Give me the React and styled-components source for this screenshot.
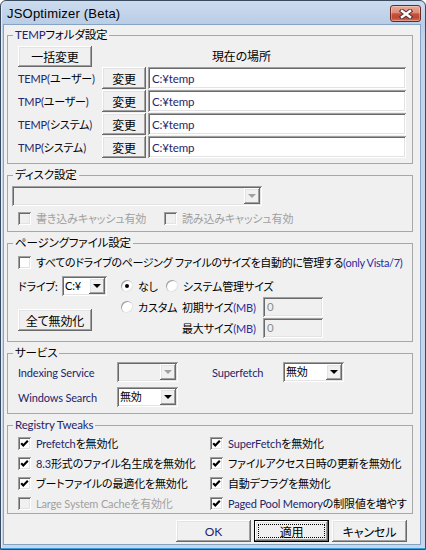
import React from "react";
import styled, { createGlobalStyle, css } from "styled-components";

const GlobalStyle = createGlobalStyle`
  html, body {
    margin: 0;
    padding: 0;
    background: #ffffff;
  }
  body {
    font-family: Lato, "Noto Sans CJK JP", sans-serif;
    font-size: 11px;
    letter-spacing: -0.15px;
    font-feature-settings: "palt";
    color: #000;
  }
  * {
    box-sizing: border-box;
  }
`;

// classic 3D edges
const sunken = css`
  box-shadow: inset 1px 1px 0 #a0a0a0, inset -1px -1px 0 #ffffff,
    inset 2px 2px 0 #696969, inset -2px -2px 0 #e3e3e3;
`;

const raised = css`
  box-shadow: inset -1px -1px 0 #696969, inset 1px 1px 0 #ffffff,
    inset -2px -2px 0 #a0a0a0, inset 2px 2px 0 #e3e3e3;
`;

const CheckMark = () => (
  <svg width="13" height="13" viewBox="0 0 13 13">
    <polyline
      points="3.2,6.2 5.3,8.4 9.8,3.8"
      fill="none"
      stroke="#000"
      strokeWidth="2.2"
    />
  </svg>
);

const CheckBox = ({ checked, disabled, children }) => (
  <CheckLabel $disabled={disabled}>
    <Box $disabled={disabled}>{checked && <CheckMark />}</Box>
    {children}
  </CheckLabel>
);

const RadioButton = ({ checked, children }) => (
  <CheckLabel>
    <Radio $checked={checked} />
    {children}
  </CheckLabel>
);

const ComboBox = ({ width, disabled, value }) => (
  <Combo $w={width} $disabled={disabled}>
    <ComboText>{value}</ComboText>
    <ComboArrow $disabled={disabled} />
  </Combo>
);

const tempRows = [
  ["TEMP", "ユーザー"],
  ["TMP", "ユーザー"],
  ["TEMP", "システム"],
  ["TMP", "システム"],
];

const App = () => {
  return (
    <>
      <GlobalStyle />
      <Window>
        <TitleBar>
          <Title>JSOptimizer (Beta)</Title>
          <CloseButton>
            <svg width="14" height="10" viewBox="0 0 14 10">
              <path
                d="M3 2 L11 8 M11 2 L3 8"
                stroke="#5b3030"
                strokeWidth="4.4"
                strokeLinecap="square"
              />
              <path
                d="M3 2 L11 8 M11 2 L3 8"
                stroke="#ffffff"
                strokeWidth="2.4"
                strokeLinecap="square"
              />
            </svg>
          </CloseButton>
        </TitleBar>

        <Client>
          <Group>
            <Legend>
              <Lat>TEMP</Lat>フォルダ設定
            </Legend>
            <TempGrid>
              <Button $w={74} $h={21}>
                一括変更
              </Button>
              <CurrentLabel>現在の場所</CurrentLabel>
              {tempRows.map(([name, kind], i) => (
                <React.Fragment key={i}>
                  <RowLabel>
                    <Lat>{name}(</Lat>
                    {kind}
                    <Lat>)</Lat>
                  </RowLabel>
                  <Button $w={44}>変更</Button>
                  <TextBox readOnly value="C:¥temp" />
                </React.Fragment>
              ))}
            </TempGrid>
          </Group>

          <Group>
            <Legend>ディスク設定</Legend>
            <DiskBody>
              <ComboBox width={250} disabled value="" />
              <DiskChecks>
                <CheckBox disabled>書き込みキャッシュ有効</CheckBox>
                <CheckBox disabled>読み込みキャッシュ有効</CheckBox>
              </DiskChecks>
            </DiskBody>
          </Group>

          <Group>
            <Legend>ページングファイル設定</Legend>
            <PagingBody>
              <CheckRow>
                <CheckBox>
                  <TightText>
                    すべてのドライブのページング ファイルのサイズを自動的に管理する
                    <Blue>(only Vista/7)</Blue>
                  </TightText>
                </CheckBox>
              </CheckRow>
              <PagingMain>
                <DriveCol>
                  <DriveRow>
                    <span>ドライブ:</span>
                    <ComboBox width={45} value="C:¥" />
                  </DriveRow>
                  <Button $w={74}>全て無効化</Button>
                </DriveCol>
                <SizeGrid>
                  <RadioRow>
                    <RadioButton checked>なし</RadioButton>
                    <RadioButton>システム管理サイズ</RadioButton>
                  </RadioRow>
                  <RadioButton>カスタム</RadioButton>
                  <SizeLabel>
                    初期サイズ<Blue>(MB)</Blue>
                  </SizeLabel>
                  <TextBox readOnly disabled value="0" $w={60} $h={20} />
                  <SizeLabel $col={2}>
                    最大サイズ<Blue>(MB)</Blue>
                  </SizeLabel>
                  <TextBox readOnly disabled value="0" $w={60} $h={20} />
                </SizeGrid>
              </PagingMain>
            </PagingBody>
          </Group>

          <Group>
            <Legend>サービス</Legend>
            <ServiceGrid>
              <Lat>Indexing Service</Lat>
              <ComboBox width={61} disabled value="" />
              <Lat>Superfetch</Lat>
              <ComboBox width={61} value="無効" />
              <Lat>Windows Search</Lat>
              <ComboBox width={61} value="無効" />
            </ServiceGrid>
          </Group>

          <Group>
            <Legend>
              <Lat>Registry Tweaks</Lat>
            </Legend>
            <TweakGrid>
              <CheckBox checked>
                <span>
                  <Lat>Prefetch</Lat>を無効化
                </span>
              </CheckBox>
              <CheckBox checked>
                <span>
                  <Lat>SuperFetch</Lat>を無効化
                </span>
              </CheckBox>
              <CheckBox checked>
                <span>
                  <Lat>8.3</Lat>形式のファイル名生成を無効化
                </span>
              </CheckBox>
              <CheckBox checked>ファイルアクセス日時の更新を無効化</CheckBox>
              <CheckBox checked>ブートファイルの最適化を無効化</CheckBox>
              <CheckBox checked>自動デフラグを無効化</CheckBox>
              <CheckBox disabled>Large System Cacheを有効化</CheckBox>
              <CheckBox checked>
                <span>
                  <Lat>Paged Pool Memory</Lat>の制限値を増やす
                </span>
              </CheckBox>
            </TweakGrid>
          </Group>

          <ButtonRow>
            <Button $w={75}>
              <Lat>OK</Lat>
            </Button>
            <Button $w={75} $default>
              適用
            </Button>
            <Button $w={75}>キャンセル</Button>
          </ButtonRow>
        </Client>
      </Window>
    </>
  );
};

const Window = styled.div`
  width: 426px;
  height: 550px;
  display: flex;
  flex-direction: column;
  border: 1px solid #3b4b5f;
  border-radius: 6px 6px 0 0;
  background: linear-gradient(#cddcef, #b9cde6 23px, #c2d5ec 40px, #c4d7ed);
  box-shadow: inset 0 -1px 0 #3a9ddc, inset 1px 0 0 #e4eef9;
`;

const TitleBar = styled.div`
  height: 23px;
  flex: none;
  display: flex;
  justify-content: space-between;
  align-items: center;
  padding: 0 4px 0 6px;
`;

const Title = styled.span`
  font-family: "Liberation Sans", Arial, sans-serif;
  font-size: 13px;
  letter-spacing: 0.2px;
  color: #000;
  margin-top: 1px;
`;

const CloseButton = styled.div`
  align-self: flex-start;
  margin-top: 4px;
  width: 31px;
  height: 17px;
  border: 1px solid #6b2a22;
  border-radius: 3px;
  background: linear-gradient(
    #e9a99a 0%,
    #dc8c79 45%,
    #c9533d 52%,
    #c04631 78%,
    #d4765d 100%
  );
  box-shadow: inset 0 0 0 1px rgba(255, 255, 255, 0.3);
  display: flex;
  align-items: center;
  justify-content: center;
`;

const Client = styled.div`
  flex: 1;
  margin: 0 4px 4px 2px;
  background: #f0f0f0;
  border: 1px solid #86a2c4;
  padding: 3px 7px 2px 3px;
  display: flex;
  flex-direction: column;
  gap: 4px;
`;

const Group = styled.fieldset`
  margin: 0;
  padding: 0;
  min-width: 0;
  border: 1px solid #a7a7a7;
`;

const Legend = styled.legend`
  margin-left: 5px;
  padding: 0 2px;
  height: 14px;
  line-height: 14px;
  font-size: 11.5px;
`;

const Lat = styled.span`
  color: #25256a;
`;

const Blue = styled.span`
  color: #2b2ba0;
`;

const TightText = styled.span`
  letter-spacing: -0.35px;
`;

const Button = styled.button`
  font: inherit;
  letter-spacing: inherit;
  font-feature-settings: inherit;
  color: #000;
  width: ${(p) => p.$w}px;
  height: ${(p) => p.$h || 22}px;
  padding: 0;
  border: none;
  background: #f0f0f0;
  position: relative;
  font-size: 12px;
  ${raised}
  ${(p) =>
    p.$default &&
    css`
      box-shadow: inset 0 0 0 1px #000, inset -2px -2px 0 #696969,
        inset 2px 2px 0 #ffffff, inset -3px -3px 0 #a0a0a0,
        inset 3px 3px 0 #e3e3e3;
      &::after {
        content: "";
        position: absolute;
        inset: 4px;
        border: 1px dotted #000;
      }
    `}
`;

const TextBox = styled.input`
  font: inherit;
  letter-spacing: inherit;
  font-size: 11.5px;
  color: ${(p) => (p.disabled ? "#8c8c8c" : "#25256a")};
  width: ${(p) => (p.$w ? `${p.$w}px` : "100%")};
  height: ${(p) => p.$h || 22}px;
  border: none;
  outline: none;
  padding: 0 4px;
  background: ${(p) => (p.disabled ? "#f0f0f0" : "#ffffff")};
  ${sunken}
`;

const TempGrid = styled.div`
  display: grid;
  grid-template-columns: 84px 46px 258px;
  grid-template-rows: 20px repeat(4, 22px);
  row-gap: 1px;
  align-items: center;
  padding: 4px 0 5px 10px;

  & > button:first-child {
    align-self: start;
  }
`;

const RowLabel = styled.span`
  white-space: nowrap;
`;

const CurrentLabel = styled.span`
  grid-column: 2 / 4;
  padding-left: 110px;
  align-self: start;
  padding-top: 1px;
  font-size: 12px;
`;

const CheckLabel = styled.span`
  display: inline-flex;
  align-items: center;
  gap: 5px;
  white-space: nowrap;
  color: ${(p) => (p.$disabled ? "#a0a0a0" : "#000")};
`;

const Box = styled.span`
  width: 13px;
  height: 13px;
  flex: none;
  display: flex;
  background: ${(p) => (p.$disabled ? "#f0f0f0" : "#ffffff")};
  ${sunken}
`;

const Radio = styled.span`
  width: 12px;
  height: 12px;
  flex: none;
  border-radius: 50%;
  background: #ffffff;
  box-shadow: inset 1px 1px 0 #a0a0a0, inset -1px -1px 0 #e3e3e3;
  display: flex;
  align-items: center;
  justify-content: center;

  &::after {
    content: "";
    width: 4px;
    height: 4px;
    border-radius: 50%;
    background: ${(p) => (p.$checked ? "#000" : "transparent")};
  }
`;

const Combo = styled.div`
  width: ${(p) => p.$w}px;
  height: 20px;
  display: flex;
  align-items: center;
  padding: 2px;
  background: ${(p) => (p.$disabled ? "#f0f0f0" : "#ffffff")};
  ${sunken}
`;

const ComboText = styled.span`
  flex: 1;
  padding-left: 1px;
  line-height: 16px;
  overflow: hidden;
  white-space: nowrap;
`;

const ComboArrow = styled.span`
  width: 16px;
  height: 16px;
  flex: none;
  background: #f0f0f0;
  display: flex;
  align-items: center;
  justify-content: center;
  ${raised}

  &::before {
    content: "";
    border-left: 4px solid transparent;
    border-right: 4px solid transparent;
    border-top: 4px solid ${(p) => (p.$disabled ? "#a0a0a0" : "#000")};
  }
`;

const DiskBody = styled.div`
  display: flex;
  flex-direction: column;
  gap: 2px;
  padding: 4px 0 3px 4px;
`;

const DiskChecks = styled.div`
  height: 20px;
  display: grid;
  grid-template-columns: 146px auto;
  align-items: center;
  padding-left: 6px;
`;

const PagingBody = styled.div`
  display: flex;
  flex-direction: column;
  gap: 4px;
  padding: 2px 0 3px 10px;
`;

const CheckRow = styled.div`
  height: 20px;
  display: flex;
  align-items: center;
`;

const PagingMain = styled.div`
  display: flex;
`;

const DriveCol = styled.div`
  width: 103px;
  display: flex;
  flex-direction: column;
  align-items: flex-start;
  gap: 13px;
`;

const DriveRow = styled.div`
  height: 20px;
  display: grid;
  grid-template-columns: 44px 45px;
  align-items: center;
  white-space: nowrap;
`;

const SizeGrid = styled.div`
  display: grid;
  grid-template-columns: 61px 81px 60px;
  grid-template-rows: 20px 21px 21px;
  align-items: center;
`;

const RadioRow = styled.div`
  grid-column: 1 / -1;
  display: flex;
  align-items: center;
  gap: 8px;
`;

const SizeLabel = styled.span`
  white-space: nowrap;
  grid-column: ${(p) => p.$col || "auto"};
`;

const ServiceGrid = styled.div`
  display: grid;
  grid-template-columns: 99px 95px 71px 61px;
  grid-template-rows: 20px 20px;
  row-gap: 5px;
  align-items: center;
  padding: 2px 0 6px 10px;
`;

const TweakGrid = styled.div`
  display: grid;
  grid-template-columns: 192px auto;
  grid-auto-rows: 20px;
  align-items: center;
  padding: 1px 0 0 10px;
`;

const ButtonRow = styled.div`
  display: flex;
  justify-content: flex-end;
  gap: 3px;
  margin-top: 2px;
  padding-right: 6px;
`;

export default App;
